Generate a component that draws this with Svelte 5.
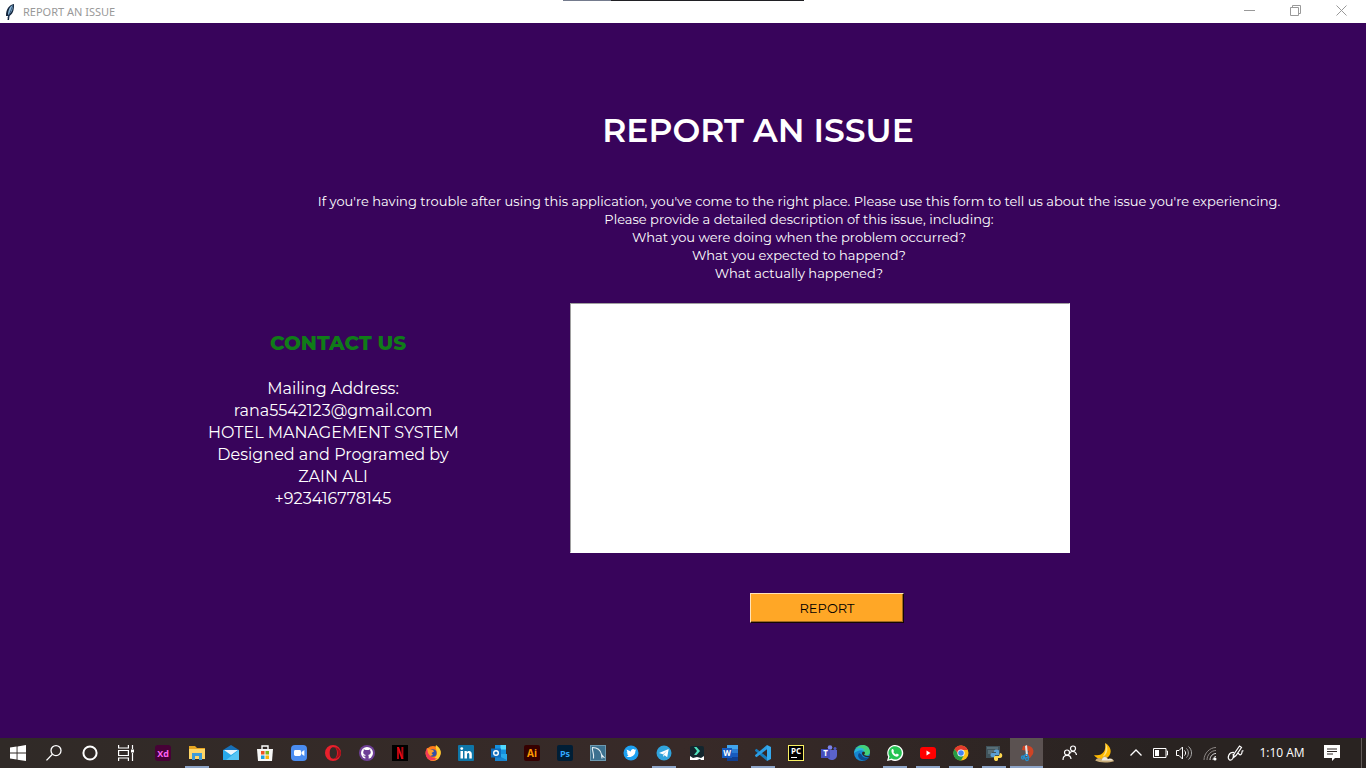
<script>
  let details = $state('');

  const label = (text, x, y, size, fill) =>
    `<text x="${x}" y="${y}" font-size="${size}" font-weight="700" font-family="Open Sans, sans-serif" text-anchor="middle" fill="${fill}">${text}</text>`;

  const system = [
    { name: 'Start', art: '<path fill="#fff" d="M0 2.5 6.6 1.5V7.5H0zM7.5 1.4 16 0V7.5H7.5zM0 8.5H6.6V14.6L0 13.6zM7.5 8.5H16V16L7.5 14.7z"/>' },
    { name: 'Search', art: '<g fill="none" stroke="#fff" stroke-width="1.3"><circle cx="10" cy="5.6" r="5"/><path d="M6.4 9.2.5 15.4"/></g>' },
    { name: 'Cortana', art: '<circle cx="8" cy="8" r="6.6" fill="none" stroke="#fff" stroke-width="2"/>' },
    { name: 'Task View', art: '<g fill="none" stroke="#fff" stroke-width="1.2"><path d="M.6 0V3H10.4V0M.6 16V13H10.4V16M.6 5.5H10.4V10.5H.6zM14.5 0V4M14.5 8V16"/></g><path fill="#fff" d="M13 4.5H16V7.5H13z"/>' }
  ];

  const apps = [
    { name: 'Adobe XD', wide: true, art: '<rect width="16" height="16" rx="3" fill="#470137"/>' + label('Xd', 8, 11.5, 9, '#ff61f6') },
    { name: 'File Explorer', wide: true, open: true, art: '<path fill="#e5a522" d="M0 1H6L8 3H16V7H0z"/><path fill="#ffd667" d="M0 4H16V14H0z"/><path fill="#3e9bd6" d="M3 8H13V15H10V11H6V15H3z"/>' },
    { name: 'Mail', wide: true, art: '<path fill="#1670b8" d="M0 5 8 0 16 5V9H0z"/><path fill="#27a9ea" d="M0 5H16V15H0z"/><path fill="#e8f4fc" d="M1 5H15L8 10z"/><path fill="#55c5f5" d="M16 5V15H3z"/><path fill="#e8f4fc" d="M2 5H14L9 9z"/>' },
    { name: 'Microsoft Store', wide: true, art: '<path d="M5 5V1H11V5" fill="none" stroke="#fff" stroke-width="1.4"/><path fill="#f6f6f6" d="M0 4H16L15 16H1z"/><path fill="#f05224" d="M4 6H7.5V9.5H4z"/><path fill="#7db61f" d="M8.5 6H12V9.5H8.5z"/><path fill="#1ba1e2" d="M4 10.5H7.5V14H4z"/><path fill="#f9b50b" d="M8.5 10.5H12V14H8.5z"/>' },
    { name: 'Zoom', wide: true, art: '<rect width="16" height="16" rx="4" fill="#4a8cf0"/><rect x="3" y="5" width="7" height="6" rx="1.4" fill="#fff"/><path fill="#fff" d="M10.5 7 13.4 5V11L10.5 9z"/>' },
    { name: 'Opera', wide: true, art: '<path fill="#e8202c" fill-rule="evenodd" d="M8 0A8 8 0 1 0 8 16 8 8 0 1 0 8 0M8.3 2.3C11 2.3 12 5 12 8S11 13.7 8.3 13.7 4.7 11 4.7 8 5.7 2.3 8.3 2.3"/><path fill="#a70e19" d="M9 2C14 3 14 13 9 14 12 14 15 12 16 8 15 4 12 2 9 2"/>' },
    { name: 'GitHub', art: '<circle cx="8" cy="8" r="8" fill="#6e3f96"/><circle cx="8" cy="8" r="6" fill="#fff"/><path fill="#6e3f96" d="M6.3 14V11.7C4.8 12 4.5 11 4 10.5 5 10.4 5.2 11 6.3 10.8L6.8 10.1C4.5 9.7 4 8.2 4.3 6.6L4.8 5.8 4.7 4.2 6.5 4.9H9.5L11.3 4.2 11.2 5.8 11.7 6.6C12 8.4 11.3 9.7 9.2 10.1L9.7 11V14z"/>' },
    { name: 'Netflix', art: '<path fill="#000" d="M0 0H16V16H0z"/><path fill="#b1060f" d="M5 2H7V14H5zM9.4 2H11.4V14H9.4z"/><path fill="#e50914" d="M5 2H7L11.4 14H9.4z"/>' },
    { name: 'Firefox', art: '<circle cx="8" cy="8.5" r="7.5" fill="#ff7b19"/><path fill="#ffcf32" d="M11 0C15.5 3 17 7 15 11 13.5 15 9 16.5 5 15 10 14 12 11 12 8 12 5 10 3 11 0"/><path fill="#f43958" d="M2 3C0 6 0 12 4 14.5 7 16.5 11 15 12 13 8 14 4 11 4 7z"/><circle cx="7.8" cy="8" r="3.8" fill="#3452a5"/><path fill="#ff9e2c" d="M2 3 5 4.5 8 5 9 6.5 6.5 8 8 10 5 11 3 8z"/>' },
    { name: 'LinkedIn', art: '<rect width="16" height="16" rx="1" fill="#0e76a8"/><path fill="#fff" d="M2.5 6H5V13.5H2.5zM6.5 6H8.8V7.2C10 5.2 13.8 5.5 13.8 9V13.5H11.3V9.5C11.3 7.3 9 7.5 9 9.5V13.5H6.5z"/><circle cx="3.75" cy="3.6" r="1.4" fill="#fff"/>' },
    { name: 'Outlook', art: '<path fill="#1490df" d="M4 0H15V9H4z"/><path fill="#50d9ff" d="M9.5 0H15V4.5H9.5z"/><path fill="#28a8ea" d="M4 9H16V16H4z"/><path fill="#1783cf" d="M4 9 16 15V16H4z"/><rect y="3.5" width="10" height="9" fill="#0f6cbd"/><circle cx="5" cy="8" r="2.3" stroke="#fff" stroke-width="1.4" fill="none"/>' },
    { name: 'Illustrator', art: '<rect width="16" height="16" rx="2" fill="#350000"/>' + label('Ai', 8, 11.5, 10, '#ff9a00') },
    { name: 'Photoshop', art: '<rect width="16" height="16" rx="2" fill="#001e36"/>' + label('Ps', 8, 11.5, 9, '#31a8ff') },
    { name: 'MySQL Workbench', art: '<rect x=".5" y=".5" width="15" height="15" fill="#3c718f" stroke="#6c99b0"/><path d="M3.5 13.5C4.500 8 1.5 5 2.5 2.500 7 2.5 10.5 5 11.5 9.500L14.500 13M11.500 9.500 12 13.500" fill="none" stroke="#e5eef3" stroke-width="1.1"/>' },
    { name: 'Twitter', art: '<circle cx="8" cy="8" r="7.5" fill="#1da1f2"/><path fill="#fff" d="M3.5 4.5 7.8 6.4C7.8 4 10.5 3.2 11.8 4.7L13.2 4.5 12.4 6C12.5 10.5 8 13.3 3.5 11.5L5.6 10.7 4 9.4 5 9.2 3.5 7.4 4.5 7.4z"/>' },
    { name: 'Telegram', open: true, art: '<circle cx="8" cy="8" r="7.5" fill="#30a3dc"/><path fill="#fff" d="M3 8 12.7 4 11.2 12.2 8.6 10.3 7.3 11.7 6.9 9.3z"/><path fill="#91c9e7" d="M6.9 9.3 11 5.8 7.7 9.7 7.3 11.7z"/>' },
    { name: 'Filmora', art: '<rect x="1" y="1" width="14" height="14" rx="2" fill="#13262e"/><path fill="#4ee2bd" d="M5 2 7.500 2 11 6 7.500 10H5L8 6z"/><path fill="#fff" d="M1 11 4 13 8 12 12 13 15 11V15H12L11 14 8 15H1z"/>' },
    { name: 'Word', art: '<path fill="#41a5ee" d="M5 0H16V4H5z"/><path fill="#2b7cd3" d="M5 4H16V8H5z"/><path fill="#185abd" d="M5 8H16V12H5z"/><path fill="#103f91" d="M5 12H16V16H5z"/><rect y="3" width="10" height="10" fill="#185abd"/>' + label('W', 5, 11, 8, '#fff') },
    { name: 'Visual Studio Code', open: true, art: '<path fill="#167dbd" d="M0 5 1.5 3.8 12 12V16L.2 6z"/><path fill="#2c9ee5" d="M0 11 1.5 12.3 12 4.2V0L.2 10z"/><path fill="#34a9ee" d="M12 0 16 2V14L12 16z"/>' },
    { name: 'PyCharm', art: '<rect x=".5" y=".5" width="15" height="15" fill="#000" stroke="#f8ef62"/>' + label('PC', 8, 9, 8, '#fff') + '<path fill="#fff" d="M3 12H9V13H3z"/>' },
    { name: 'Teams', art: '<circle cx="9" cy="2.5" r="2.3" fill="#7b83eb"/><circle cx="14" cy="3.5" r="1.5" fill="#5059c9"/><path fill="#5b63cc" d="M6 5H16V10C16 16 7 17 6 11z"/><rect y="4" width="9" height="9" fill="#454ebc"/>' + label('T', 4.5, 11, 8, '#fff') },
    { name: 'Edge', art: '<circle cx="8" cy="8" r="8" fill="#1686d1"/><path fill="#43d17b" d="M1 5C5-3 16-1 16 7 16 10 13 11 10 10 12 6 6 3 1 5"/><path fill="#2bb7d9" d="M0 8C1 2 9 1 11 6 6 4 3 6 0 8"/><path fill="#0c4b91" d="M5 8C2 12 7 16 11 15.5 15 14 15 12 15 12 11 14 8 12 7.5 9.5"/><path fill="#2f2926" d="M8 8C9 6 11 7 11 8L10 10 13 11H16V11.500C12 13 8 11 8 8"/>' },
    { name: 'WhatsApp', open: true, art: '<path fill="#fff" d="M0 16 1.2 11.8A8 8 0 1 1 4.2 14.9z"/><path fill="#25c353" d="M1.6 14.4 2.5 11.5A6.7 6.7 0 1 1 4.7 13.6z"/><path fill="#fff" d="M4.5 5C5 3.5 6.3 4 6.5 4.8L7 6.2 6.3 7.1C7 8.3 7.8 9 8.9 9.5L9.8 8.6 11.7 9.5C12 11 10.4 12 9 11.6 6.5 11 4 8 4.5 5"/>' },
    { name: 'YouTube', open: true, art: '<rect y="2" width="16" height="12" rx="3" fill="#f00"/><path fill="#fff" d="M6.5 5.5 10.5 8 6.5 10.5z"/>' },
    { name: 'Chrome', open: true, art: '<circle cx="8" cy="8" r="7.5" fill="#fbc116"/><path fill="#e33b2e" d="M1.5 4A7.5 7.5 0 0 1 14.8 5H8L5 9z"/><path fill="#269b45" d="M1.5 4A7.5 7.5 0 0 0 8 15.5L11 10H6z"/><circle cx="8" cy="8" r="3.6" fill="#fff"/><circle cx="8" cy="8" r="2.8" fill="#4285f4"/>' },
    { name: 'Python', open: true, art: '<path fill="#40535b" d="M0 1H14V13H0z"/><path d="M1 3H12M2 6H8M2 8H6" stroke="#7d979f" stroke-width=".8"/><path fill="#5a9fd4" d="M8 6C8 4 13 4 13 6V10H9V12H6C4 12 4 8 6 8H10V7H8z"/><path fill="#ffd94f" d="M14 8C17 8 17 13 14 13H12V15C11 17 8 16 8 14V12L9 11H13z"/>' },
    { name: 'Snipping Tool', open: true, active: true, art: '<path fill="#ce4425" d="M4 1C11-1 16 3 14 9L11 13 8 11 10 6 3 5z"/><path fill="#dfe5e8" d="M6 1 8 0 9 10 7 11z"/><path d="M7 9 4 13M8 9 10 13" stroke="#2490d0" stroke-width="1.5"/><g fill="none" stroke="#2490d0" stroke-width="1.3"><circle cx="4" cy="12.5" r="1.5"/><circle cx="8" cy="14" r="1.5"/></g>' }
  ];

  const tray = [
    { name: 'People', width: 32, art: '<g fill="none" stroke="#fff" stroke-width="1.2"><circle cx="11" cy="3.5" r="2.5"/><path d="M7.5 9C8 5.5 14 5.5 14.5 10"/><circle cx="5" cy="7.5" r="2.5"/><path d="M1 15C1 9 8.5 9 9 14"/></g>' },
    { name: 'Weather', width: 36, large: true, art: '<path fill="#ffb900" d="M9 0C14 3 14.500 8 11.500 11 8 14 2 13 0 9.500 6 11 10 7 9 0"/><path fill="#ffe27d" d="M9 0C12 4 11 9 7 11 9 8 10 5 9 0"/><path fill="#c9ad78" d="M1 14C3 11 5 12 6 13 8 9 11 11 11 13 14 11 16 14 16 14.500 12 16 4 16 1 14"/><path fill="#eee9e0" d="M7 12C9 10 10 12 11 13 13 12 15 13 15 14H6z"/>' },
    { name: 'Show hidden icons', width: 28, art: '<path d="m2.5 10.5 5.5-5.5 5.5 5.5" fill="none" stroke="#fff" stroke-width="1.3"/>' },
    { name: 'Battery', width: 20, art: '<path d="M1.5 3.5H14V12.5H1.5zM14.5 6H15.5V10H14.5" fill="none" stroke="#fff"/><path fill="#fff" d="M3 5H7V11H3z"/>' },
    { name: 'Volume', width: 27, art: '<g fill="none" stroke="#fff"><path d="M.5 5.5H3L6.5 2V14L3 10.5H.5zM8.5 5.5C10 7 10 9 8.5 10.5"/><path stroke="#aaa" d="M10.5 3.5C13 6 13 10 10.5 12.5M12.5 1.5C16.5 5 16.5 11 12.5 14.5"/></g>' },
    { name: 'Network', width: 26, art: '<g fill="none" stroke="#8e8886"><path d="M2 15C2 8 8 2.5 14 2.5M5 15C5 10 9 5.5 14 5.5"/><path stroke="#ddd" d="M8 15C8 11 11 8.5 14 8.5M11 15C11 13 12.5 11.5 14 11.5"/></g><circle cx="13" cy="14" r="1.5" fill="#fff"/>' },
    { name: 'Windows Ink Workspace', width: 26, art: '<g fill="none" stroke="#fff" stroke-width="1.2"><path d="m5.500 12.500.500-3.500 5.500-8 2 1.500-5.500 8zM6 7.500C.500 7-1 13 1.500 15 5 16 6 11 5 9M9 9C11 7 11 11 13 9.500 15 8 13 5 15.500 6"/></g>' }
  ];

  const svg = (art) => `<svg viewBox="0 0 16 16" aria-hidden="true">${art}</svg>`;
</script>

<div class="window">
  <header class="titlebar">
    <svg class="feather" viewBox="0 0 10 16" aria-hidden="true">
      <path fill="#14263d" d="M9 0C4 1 1 5 1 12L3 12 2.5 16H4L4.5 12C9 9 9 4 9 0" />
      <path fill="#89b7d9" d="M8 1C5 2 3 6 3 11L4.5 10C7 8 8 5 8 1" />
      <path d="M8 1 3 14" stroke="#243f62" stroke-width=".8" />
    </svg>
    <span class="caption">REPORT AN ISSUE</span>
    <div class="edge"></div>
    <div class="controls">
      <button aria-label="Minimize"><svg viewBox="0 0 11 11"><path d="M0 5.5H11" /></svg></button>
      <button aria-label="Restore"><svg viewBox="0 0 11 11"><path d="M.5 2.5H8.5V10.5H.5zM2.5 2.5V.5H10.5V8.5H8.5" /></svg></button>
      <button aria-label="Close"><svg viewBox="0 0 11 11"><path d="m.5.5 10 10m0-10-10 10" /></svg></button>
    </div>
  </header>

  <main>
    <h1>REPORT AN ISSUE</h1>
    <p class="intro" id="intro">
      If you're having trouble after using this application, you've come to the right place. Please use this form to tell us about the issue you're experiencing.<br />
      Please provide a detailed description of this issue, including:<br />
      What you were doing when the problem occurred?<br />
      What you expected to happend?<br />
      What actually happened?
    </p>
    <div class="content">
      <section class="contact">
        <h2>CONTACT US</h2>
        <address>
          Mailing Address:<br />
          rana5542123@gmail.com<br />
          HOTEL MANAGEMENT SYSTEM<br />
          Designed and Programed by<br />
          ZAIN ALI<br />
          +923416778145
        </address>
      </section>
      <form onsubmit={(e) => e.preventDefault()}>
        <textarea aria-label="Issue description" aria-describedby="intro" bind:value={details}></textarea>
        <button class="report">REPORT</button>
      </form>
    </div>
  </main>

  <footer class="taskbar">
    <div class="group system">
      {#each system as item}
        <button aria-label={item.name}>{@html svg(item.art)}</button>
      {/each}
    </div>
    <div class="group apps">
      {#each apps as app}
        <button aria-label={app.name} class:wide={app.wide} class:open={app.open} class:active={app.active}>{@html svg(app.art)}</button>
      {/each}
    </div>
    <div class="group tray">
      {#each tray as item}
        <button aria-label={item.name} class:large={item.large} style:width="{item.width}px">{@html svg(item.art)}</button>
      {/each}
      <time datetime="01:10">1:10 AM</time>
      <button class="notes" aria-label="Notifications">
        <svg viewBox="0 0 16 16"><path fill="#fff" d="M0 0H16V13H11L8 16V13H0z" /><path d="M3 4H13M3 6.5H13M3 9H9" stroke="#2c2523" /></svg>
      </button>
      <span class="desktop"></span>
    </div>
  </footer>
</div>

<style>
  :global(body) {
    margin: 0;
  }
  .window {
    min-height: 100vh;
    display: flex;
    flex-direction: column;
    background: #38045b;
    color: #fff;
    font-family: Montserrat, Inter, sans-serif;
  }
  button {
    border: 0;
    padding: 0;
    background: none;
    color: inherit;
    font: inherit;
  }
  .titlebar {
    height: 23px;
    display: flex;
    align-items: center;
    position: relative;
    background: #fff;
    color: #999;
  }
  .feather {
    width: 10px;
    height: 16px;
    margin: 0 8px 0 5px;
  }
  .caption {
    font: 11px/20px "Noto Sans", sans-serif;
  }
  .edge {
    position: absolute;
    top: 0;
    left: 50%;
    width: 241px;
    height: 1px;
    margin-left: -120px;
    background: linear-gradient(90deg, #747b8d 48px, #202024 48px);
  }
  .controls {
    display: flex;
    align-self: flex-start;
    margin-left: auto;
    padding-right: 2px;
  }
  .controls button {
    width: 46px;
    height: 21px;
    display: grid;
    place-items: center;
  }
  .controls svg {
    width: 11px;
    height: 11px;
    fill: none;
    stroke: #999;
  }
  main {
    flex: 1;
    padding-top: 85px;
  }
  h1 {
    margin: 0 0 40px;
    padding-left: 150px;
    text-align: center;
    font-size: 33px;
    font-weight: 600;
    line-height: 44px;
  }
  .intro {
    margin: 0 0 21px;
    padding-left: 232px;
    text-align: center;
    font-size: 13px;
    line-height: 18px;
  }
  .content {
    display: flex;
    align-items: flex-start;
    gap: 112px;
    padding-left: 208px;
  }
  .contact {
    width: 250px;
    padding-top: 28px;
    text-align: center;
  }
  h2 {
    margin: 0 0 23px;
    padding-left: 10px;
    color: #107c18;
    font-size: 20px;
    font-weight: 800;
    line-height: 24px;
  }
  address {
    font-size: 16px;
    font-style: normal;
    line-height: 22px;
    white-space: nowrap;
  }
  form {
    display: flex;
    flex-direction: column;
    align-items: center;
    gap: 40px;
    width: 500px;
  }
  textarea {
    box-sizing: border-box;
    width: 100%;
    height: 250px;
    padding: 4px;
    border: 1px solid #fff;
    border-top-color: #a0a0a0;
    border-left-color: #a0a0a0;
    background: #fff;
    font: 16px/22px Montserrat, Inter, sans-serif;
    resize: none;
    outline: 0;
  }
  .report {
    box-sizing: border-box;
    width: 154px;
    height: 30px;
    margin-left: 14px;
    border: 1px solid #ffe3ba;
    border-right-color: #160800;
    border-bottom-color: #160800;
    box-shadow: inset -1px -1px #a06a20;
    background: #ffa726;
    color: #000;
    font-size: 13px;
    line-height: 18px;
  }
  .taskbar {
    height: 30px;
    display: flex;
    background: linear-gradient(90deg, #302a27, #382a28 50%, #292321 85%);
  }
  .group {
    display: flex;
  }
  .group button {
    display: grid;
    place-items: center;
    width: 33px;
    height: 30px;
    flex-shrink: 0;
  }
  .group :global(svg) {
    width: 16px;
    height: 16px;
    overflow: visible;
  }
  .group.system {
    margin-right: 2px;
  }
  .group.system button {
    width: 36px;
  }
  .group.apps .wide {
    width: 34px;
  }
  .open {
    background: linear-gradient(#8ea5c8, #8ea5c8) center bottom / 24px 2px no-repeat;
  }
  .group .active {
    background: linear-gradient(#8ea5c8, #8ea5c8) center bottom / 100% 2px no-repeat #5b5251;
  }
  .group.tray {
    align-items: center;
    margin-left: auto;
  }
  .large :global(svg) {
    width: 20px;
    height: 20px;
  }
  time {
    width: 54px;
    margin-left: 6px;
    text-align: center;
    font: 12px/30px "Open Sans", sans-serif;
    white-space: nowrap;
  }
  .group .notes {
    width: 46px;
  }
  .desktop {
    width: 1px;
    height: 30px;
    margin: 0 4px 0 6px;
    background: #625b59;
  }
</style>
